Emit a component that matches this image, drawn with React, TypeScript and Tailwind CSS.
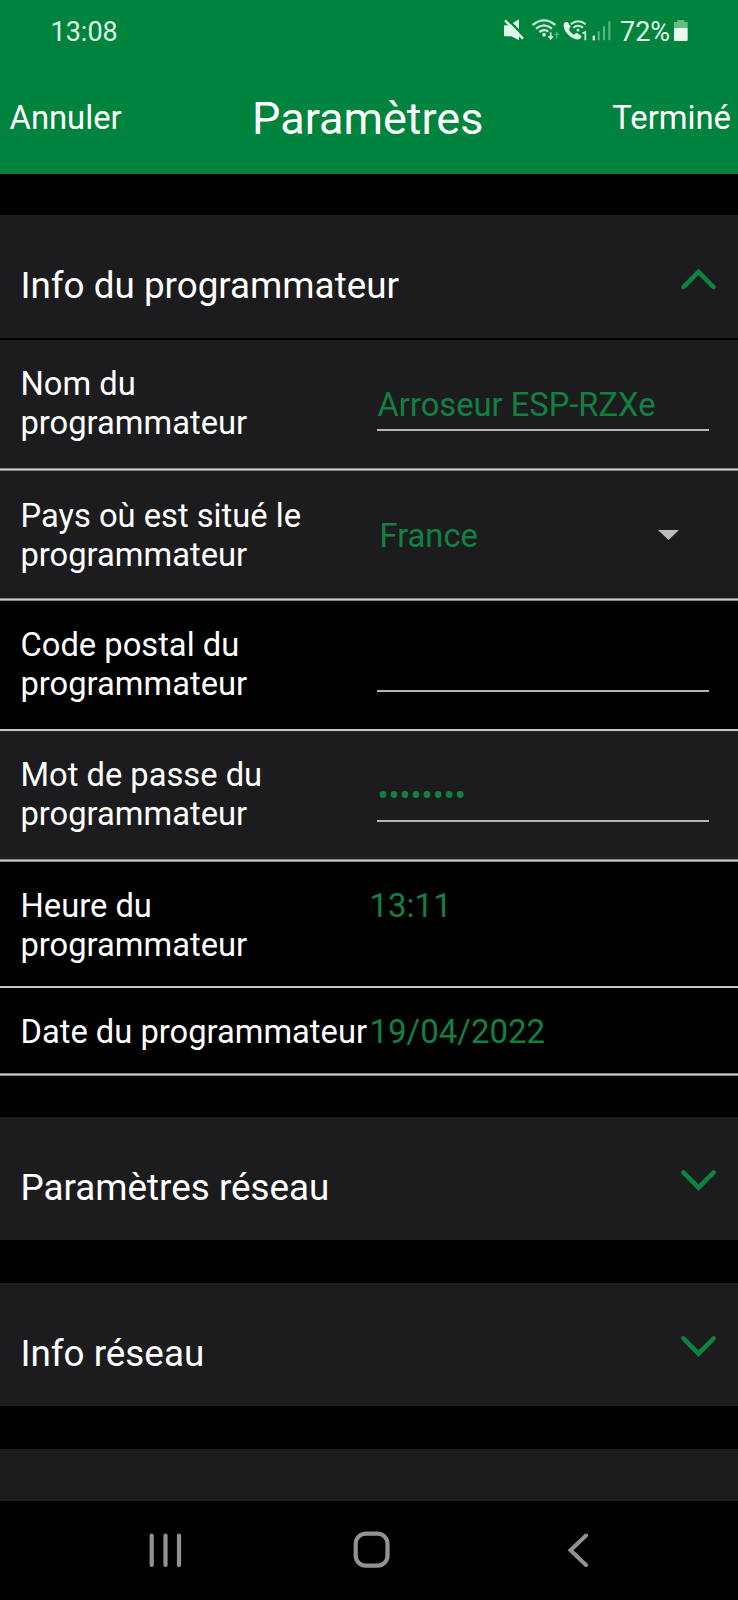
import type { ReactNode } from "react";

function MuteIcon() {
  return (
    <svg className="h-6 w-5 shrink-0" viewBox="42 54 60 72">
      <path d="M42 78Q42 76 44 76H57L87 58V121L64 109H44Q42 109 42 107Z" fill="#e0f8e6" />
      <path d="M52 57L104 110" stroke="#00843d" strokeWidth="7" />
      <path d="M45 61L99 116" stroke="#e0f8e6" strokeWidth="7" />
    </svg>
  );
}

function WifiIcon() {
  return (
    <svg className="h-6 w-7 shrink-0" viewBox="126 54 84 72" fill="none">
      <g stroke="#c9f0d4" strokeWidth="7">
        <path d="M128 75Q162 47 196 75" />
        <path d="M138 86Q162 66 186 86" />
        <path d="M148 96Q162 85 175 95" />
      </g>
      <circle cx="162" cy="104" r="5.500" fill="#d9f6e0" />
      <path d="M182 97V114" stroke="#d9f6e0" strokeWidth="5" />
      <path d="M173 109H191L182 121Z" fill="#d9f6e0" />
      <path d="M200 116V101" stroke="#4fae77" strokeWidth="5" />
      <path d="M192 105H208L200 94Z" fill="#4fae77" />
    </svg>
  );
}

function WifiCallIcon() {
  return (
    <svg className="h-6 w-6 shrink-0" viewBox="219 54 72 72" fill="none">
      <path
        d="M222 70C219 79 223 92 233 103C244 115 260 121 270 117L275 109L260 98L252 104C245 101 240 95 237 88L242 80L233 66Q225 65 222 70Z"
        fill="#e0f8e6"
      />
      <g stroke="#c9f0d4" strokeWidth="6">
        <path d="M242 73Q264 54 287 73" />
        <path d="M250 83Q264 71 279 83" />
      </g>
      <circle cx="264" cy="90" r="4.500" fill="#d9f6e0" />
      <path d="M277 100L286 96V121" stroke="#d9f6e0" strokeWidth="5" />
    </svg>
  );
}

function SignalIcon() {
  return (
    <svg className="h-6 w-5 shrink-0" viewBox="306 54 60 72">
      <path d="M308 107H315V121H308Z" fill="#e0f8e6" />
      <path d="M323 94H329V121H323ZM339 79H345V121H339ZM355 64H361V121H355Z" fill="#5db780" />
    </svg>
  );
}

function BatteryIcon() {
  return (
    <svg className="h-6 w-3.5 shrink-0" viewBox="552 54 42 72">
      <path d="M562 60H583V66H593V84H552V66H562Z" fill="#66bb86" />
      <path d="M552 84H593V120Q593 123 590 123H555Q552 123 552 120Z" fill="#eafaee" />
    </svg>
  );
}

function Chevron({ up = false }: { up?: boolean }) {
  return (
    <svg className="h-[21px] w-[35px] shrink-0" viewBox="0 0 35 21" fill="none">
      <path
        d={up ? "M2.500 18L17.500 2.800L32.500 18" : "M2.500 2.500L17.500 17.700L32.500 2.500"}
        stroke="#0b8443"
        strokeWidth="4.600"
        strokeLinecap="round"
      />
    </svg>
  );
}

function SectionHeader({ title, open = false }: { title: string; open?: boolean }) {
  return (
    <button className="flex h-[123px] w-full shrink-0 items-start justify-between bg-[#1c1c1e] pr-[22.500px] pl-[20.500px] text-left">
      <span className="pt-[49px] text-[36.800px] leading-[44px]">{title}</span>
      <span className={open ? "pt-[54px]" : "pt-[53px]"}>
        <Chevron up={open} />
      </span>
    </button>
  );
}

type RowProps = { label: ReactNode; className: string; sharpLine?: boolean; children?: ReactNode };

function Row({ label, className, sharpLine = false, children }: RowProps) {
  return (
    <div className={`flex shrink-0 flex-col justify-between ${className}`}>
      <div className="flex items-start pl-[20.500px]">
        <div className="w-[349px] shrink-0 pt-px text-[32.700px] leading-[39px] whitespace-nowrap">{label}</div>
        {children}
      </div>
      <div className={sharpLine ? "h-0.5 bg-[#c5c7c6]" : "h-[3px] border-y border-[#838384] bg-[#cfcfcf]"} />
    </div>
  );
}

function Field({ value }: { value?: string }) {
  return (
    <div className="ml-[7.500px] h-[67px] w-[332px] border-b-2 border-[#b4b4b5] pt-[22px] pl-[0.500px] text-[32.700px] leading-[39px] whitespace-nowrap text-[#118043]">
      {value}
    </div>
  );
}

export default function App() {
  return (
    <div className="flex h-[1600px] w-[738px] flex-col overflow-hidden bg-black font-['Roboto',sans-serif] text-white">
      <header className="h-[174px] shrink-0 bg-[#00843d]">
        <div className="flex h-[60px] items-start pl-[50.500px]">
          <span className="w-[453.500px] pt-4 text-[27px] leading-8 text-[#dcf7e3]">13:08</span>
          <div className="flex items-start pt-[18px]">
            <MuteIcon />
            <span className="ml-2 flex">
              <WifiIcon />
            </span>
            <span className="ml-[3px] flex">
              <WifiCallIcon />
            </span>
            <span className="ml-[5px] flex">
              <SignalIcon />
            </span>
          </div>
          <span className="ml-2 w-[54px] pt-4 text-[27px] leading-8 text-[#e0f8e6]">72%</span>
          <span className="pt-[18px]">
            <BatteryIcon />
          </span>
        </div>
        <div className="grid grid-cols-[1fr_auto_1fr] items-start pt-[31px] pr-[7px] pl-[9.500px]">
          <span className="pt-[7px] text-[32.800px] leading-[40px]">Annuler</span>
          <h1 className="pr-[5px] text-[45px] leading-[56px]">Paramètres</h1>
          <span className="pt-[7px] text-right text-[32.800px] leading-[40px]">Terminé</span>
        </div>
      </header>

      <main className="flex h-[1327px] shrink-0 flex-col overflow-hidden pt-[41px]">
        <SectionHeader title="Info du programmateur" open />
        <Row className="mt-0.5 h-[131px] bg-[#1c1c1e] pt-6" label={<>Nom du<br />programmateur</>}>
          <Field value="Arroseur ESP-RZXe" />
        </Row>
        <Row className="h-[130px] bg-[#1c1c1e] pt-[25px]" label={<>Pays où est situé le<br />programmateur</>}>
          <div className="ml-2.5 flex w-[299px] items-center justify-between pt-[21px] text-[32.700px] leading-[39px] text-[#118043]">
            France
            <svg className="mb-1 h-[10px] w-[21px]" viewBox="0 0 21 10">
              <path d="M0 0H21L10.500 10Z" fill="#bdbdbf" />
            </svg>
          </div>
        </Row>
        <Row sharpLine className="h-[130px] pt-6" label={<>Code postal du<br />programmateur</>}>
          <Field />
        </Row>
        <Row className="h-[131px] bg-[#1c1c1e] pt-6" label={<>Mot de passe du<br />programmateur</>}>
          <Field value="••••••••" />
        </Row>
        <Row sharpLine className="h-[126px] pt-6" label={<>Heure du<br />programmateur</>}>
          <span className="text-[33px] leading-[39px] text-[#118043]">13:11</span>
        </Row>
        <Row className="h-[88px] pt-6" label="Date du programmateur">
          <span className="text-[33px] leading-[39px] text-[#118043]">19/04/2022</span>
        </Row>
        <div className="mt-[41px] flex shrink-0 flex-col gap-[43px]">
          <SectionHeader title="Paramètres réseau" />
          <SectionHeader title="Info réseau" />
          <div className="h-[123px] bg-[#1c1c1e]" />
        </div>
      </main>

      <nav className="flex grow items-start pt-[30px] pl-[149px]">
        <svg className="mt-[2px] h-[35px] w-[33px]" viewBox="0 0 33 35" stroke="#929292" strokeWidth="4.200" strokeLinecap="round">
          <path d="M2.700 2.700V32M16.500 2.700V32M30 2.700V32" />
        </svg>
        <svg className="ml-[171px] h-[38px] w-[38px]" viewBox="0 0 38 38" fill="none" stroke="#929292" strokeWidth="4.200">
          <rect x="2.700" y="2.700" width="31.800" height="32" rx="10" />
        </svg>
        <svg className="ml-[176px] mt-[2px] h-[35px] w-[22px]" viewBox="0 0 22 35" fill="none" stroke="#929292" strokeWidth="4" strokeLinecap="round">
          <path d="M19 2.500L3.500 17.200L19 32" />
        </svg>
      </nav>
    </div>
  );
}
